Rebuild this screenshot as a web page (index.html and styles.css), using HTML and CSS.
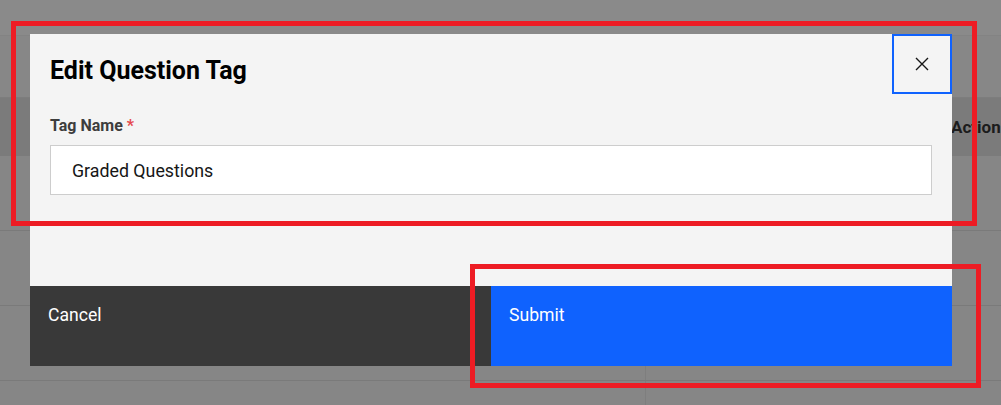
FILE: index.html
```html
<!DOCTYPE html>
<html lang="en">
<head>
<meta charset="utf-8">
<title>Edit Question Tag</title>
<link rel="stylesheet" href="styles.css">
</head>
<body>
<div class="page">
  <div class="topbar"></div>
  <div class="toolbar"></div>
  <div class="table-head">
    <div class="cell"></div>
    <div class="cell"></div>
    <div class="cell head-label">Action</div>
  </div>
  <div class="row"><div class="cell"></div><div class="cell divided"></div><div class="cell"></div></div>
  <div class="row"><div class="cell"></div><div class="cell divided"></div><div class="cell"></div></div>
  <div class="row"><div class="cell"></div><div class="cell divided"></div><div class="cell"></div></div>
  <div class="row"><div class="cell"></div><div class="cell divided"></div><div class="cell"></div></div>

  <div class="modal">
    <div class="modal-header">
      <h2 class="modal-title">Edit Question Tag</h2>
      <button class="close-btn" aria-label="Close">
        <svg width="14" height="14" viewBox="0 0 14 14" aria-hidden="true">
          <path d="M1 1 L13 13 M13 1 L1 13" stroke="#161616" stroke-width="1.4" fill="none"/>
        </svg>
      </button>
    </div>
    <div class="modal-body">
      <label class="field-label">Tag Name <span class="req">*</span></label>
      <div class="text-input">Graded Questions</div>
    </div>
    <div class="modal-footer">
      <button class="btn btn-secondary">Cancel</button>
      <button class="btn btn-primary">Submit</button>
    </div>
  </div>

  <div class="annot annot-top"></div>
  <div class="annot annot-bottom"></div>
</div>
</body>
</html>
```

FILE: styles.css
```css
* { box-sizing: border-box; }
html, body { margin: 0; padding: 0; }
body {
  width: 1001px;
  height: 405px;
  overflow: hidden;
  background: #868686;
  font-family: Roboto, "Liberation Sans", sans-serif;
}
.page {
  position: relative;
  width: 1001px;
  height: 405px;
  overflow: hidden;
}
.topbar {
  height: 35px;
  background: #8a8a8a;
}
.toolbar {
  height: 62px;
  background: #878787;
  border-top: 1px solid #838383;
}
.table-head {
  display: grid;
  grid-template-columns: 645px 306px 1fr;
  height: 59px;
  background: #7b7b7b;
  border-top: 1px solid #7d7d7d;
}
.table-head .cell {
  display: flex;
  align-items: center;
}
.head-label {
  font-family: Roboto, "Liberation Sans", sans-serif;
  font-weight: bold;
  font-size: 17px;
  color: #1c1c1c;
  white-space: nowrap;
}
.row {
  display: grid;
  grid-template-columns: 645px 306px 1fr;
  height: 75px;
  background: #868686;
  border-bottom: 1px solid #7a7a7a;
}
.row:first-of-type { height: 76px; }
.divided { border-left: 1px solid #7e7e7e; }

.modal {
  position: absolute;
  left: 30px;
  top: 34px;
  width: 922px;
  height: 332px;
  background: #f4f4f4;
  display: flex;
  flex-direction: column;
}
.modal-header {
  position: relative;
  padding: 22px 20px 0 20px;
}
.modal-title {
  margin: 0;
  font-size: 25px;
  line-height: 30px;
  font-weight: 700;
  color: #000;
}
.close-btn {
  position: absolute;
  top: 0;
  right: 0;
  width: 60px;
  height: 60px;
  padding: 0;
  margin: 0;
  background: transparent;
  border: 2px solid #0f62fe;
  display: flex;
  align-items: center;
  justify-content: center;
}
.close-btn svg { display: block; }
.modal-body {
  padding: 30px 20px 0 20px;
  display: flex;
  flex-direction: column;
  gap: 10px;
}
.field-label {
  font-size: 16px;
  line-height: 19px;
  font-weight: 700;
  color: #3d3d3d;
}
.req { color: #e5484d; }
.text-input {
  height: 50px;
  background: #fff;
  border: 1px solid #cdcdcd;
  padding: 0 21px;
  display: flex;
  align-items: center;
  font-size: 17.8px;
  color: #161616;
}
.modal-footer {
  margin-top: auto;
  display: grid;
  grid-template-columns: 1fr 1fr;
  height: 80px;
}
.btn {
  border: none;
  margin: 0;
  text-align: left;
  align-self: stretch;
  display: flex;
  align-items: flex-start;
  padding: 19px 18px 0 18px;
  font-family: Roboto, "Liberation Sans", sans-serif;
  font-size: 17.6px;
  line-height: 20px;
  color: #fff;
}
.btn-secondary { background: #393939; }
.btn-primary { background: #0f62fe; }

.annot {
  position: absolute;
  border: 5px solid #ed1c24;
  pointer-events: none;
}
.annot-top {
  left: 11px;
  top: 21px;
  width: 966px;
  height: 205px;
}
.annot-bottom {
  left: 470px;
  top: 264px;
  width: 511px;
  height: 124px;
}
```
